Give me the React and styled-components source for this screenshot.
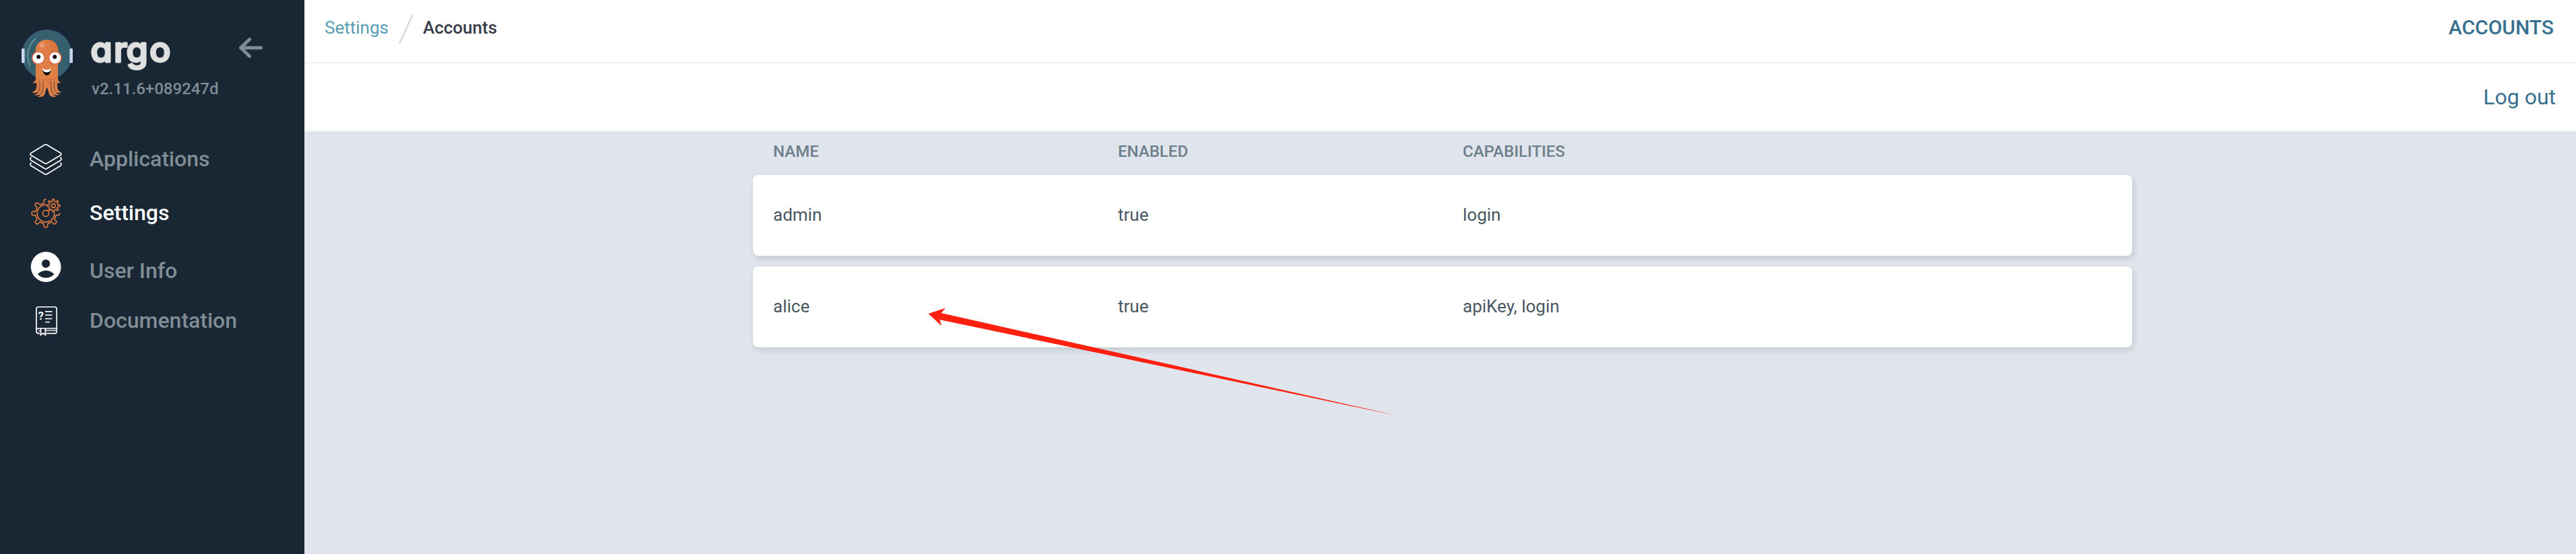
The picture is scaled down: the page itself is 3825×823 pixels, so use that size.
import React from "react";
import styled, { createGlobalStyle } from "styled-components";

const GlobalStyle = createGlobalStyle`
  *, *::before, *::after { box-sizing: border-box; }
  html, body { margin: 0; padding: 0; }
  body {
    font-family: Roboto, "Liberation Sans", sans-serif;
    background: #e0e4ec;
    overflow: hidden;
  }
`;

const Shell = styled.div`
  display: flex;
  height: 823px;
  position: relative;
`;

const Sidebar = styled.aside`
  flex: 0 0 452px;
  background: #182733;
`;

const Brand = styled.header`
  display: flex;
  align-items: flex-start;
  height: 197px;
  padding: 42px 0 0 30px;
`;

const BrandText = styled.div`
  display: flex;
  flex-direction: column;
  width: 220px;
  margin-left: 24px;
  padding-top: 12px;
`;

const Version = styled.span`
  margin-top: 2px;
  padding-left: 2px;
  font-size: 24px;
  font-weight: 500;
  line-height: 28px;
  color: #818d94;
`;

const CollapseButton = styled.button`
  display: flex;
  margin: 12px 0 0;
  padding: 0;
  border: 0;
  background: none;
`;

const Nav = styled.nav`
  display: flex;
  flex-direction: column;
`;

const NavItem = styled.a`
  display: grid;
  grid-template-columns: 48px 1fr;
  column-gap: 41px;
  align-items: center;
  height: 80px;
  padding-left: 44px;
  font-size: 32px;
  font-weight: 500;
  line-height: 36px;
  color: ${(p) => (p.$active ? "#ffffff" : "#818d94")};
`;

const NavLabel = styled.span`
  margin-top: ${(p) => p.$shift}px;
`;

const Main = styled.main`
  flex: 1;
  min-width: 0;
`;

const TopBar = styled.div`
  display: flex;
  align-items: flex-start;
  justify-content: space-between;
  height: 94px;
  padding: 21px 33px 0 30px;
  background: #fff;
  border-bottom: 2px solid #edf2f7;
`;

const Breadcrumbs = styled.div`
  display: flex;
  font-size: 26px;
  line-height: 40px;
`;

const CrumbLink = styled.a`
  color: #589db6;
`;

const Crumb = styled.span`
  font-weight: 500;
  color: #363c4a;
`;

const Slash = styled.svg`
  margin: 0 14px 0 15px;
`;

const PageTitle = styled.span`
  font-size: 30px;
  font-weight: 500;
  line-height: 40px;
  color: #396f8f;
`;

const Toolbar = styled.div`
  display: flex;
  align-items: center;
  justify-content: flex-end;
  height: 102px;
  padding-right: 30px;
  background: #fff;
  border-bottom: 2px solid #edf1f6;
`;

const LogoutLink = styled.a`
  font-size: 32px;
  line-height: 40px;
  color: #396f8f;
`;

const Table = styled.section`
  width: 2048px;
  margin: 0 0 0 666px;
`;

const TableHead = styled.div`
  display: grid;
  grid-template-columns: 1fr 1fr 2fr;
  height: 64px;
  padding-top: 14px;
  font-size: 24px;
  font-weight: 500;
  line-height: 30px;
  color: #6d7f8b;
`;

const TableRow = styled.div`
  display: grid;
  grid-template-columns: 1fr 1fr 2fr;
  align-items: center;
  height: 120px;
  margin-bottom: 16px;
  padding-bottom: 2px;
  border-radius: 8px;
  background: #fff;
  box-shadow: 2px 4px 10px rgba(20, 35, 20, 0.14);
  font-size: 26px;
  line-height: 30px;
  color: #495763;
`;

const Cell = styled.div`
  padding-left: 30px;
`;

const Pointer = styled.svg`
  position: absolute;
  left: 1370px;
  top: 450px;
  pointer-events: none;
`;

/* Smooth gear outline: four control points a tooth, joined by midpoint curves. */
function gearPath(cx, cy, tip, root, teeth, from, to) {
  const step = (Math.PI * 2) / teeth;
  const pts = [];
  const at = (r, a) => [cx + r * Math.cos(a), cy + r * Math.sin(a)];
  for (let i = from; i <= to; i += 1) {
    const a = i * step;
    if (i > from || to - from === teeth) {
      pts.push(at(root, a - step * 0.33), at(root + 0.3, a - step * 0.2), at(tip, a - step * 0.18));
    }
    pts.push(at(tip, a));
    if (i < to) {
      pts.push(at(tip, a + step * 0.18), at(root + 0.3, a + step * 0.2), at(root, a + step * 0.33));
    }
  }
  const f = (p) => p.map((n) => n.toFixed(2)).join(" ");
  let d = `M${f(pts[0])}`;
  for (let i = 1; i < pts.length - 1; i += 1) {
    const mid = [(pts[i][0] + pts[i + 1][0]) / 2, (pts[i][1] + pts[i + 1][1]) / 2];
    d += `Q${f(pts[i])} ${f(mid)}`;
  }
  return `${d}L${f(pts[pts.length - 1])}`;
}

function Mascot() {
  return (
    <svg width="80" height="104" viewBox="30 42 80 104">
      <circle cx="69.7" cy="81" r="36.4" fill="#36606e" stroke="#3b5f84" strokeWidth="1.4" />
      <rect x="32" y="72" width="4.6" height="21.5" rx="1.2" fill="#c5d6ef" />
      <rect x="103.4" y="72" width="4.6" height="21.5" rx="1.2" fill="#c5d6ef" />
      <path d="M53 57Q35 74 44.5 97.5" fill="none" stroke="#5f9297" strokeWidth="2" strokeLinecap="round" />
      <path
        d="M52.8 76C52.8 65 60 59 69.5 59S86.4 65 86.4 76L86 116C86 120 88 122 90.5 122.5C88 124 86.5 123.6 85.3 122.8C84.6 131 85 135.5 91.5 137C88.5 138.6 84 138 82 136.6C83 139 86 140.2 89 140.4C86 142 81 141.6 78.5 140C79.5 142 82 143 84.5 143.2C80 144.6 75 144 73.6 141C72 138 71.5 132 69.6 130C68 132 67.5 138 66 141C64.5 144 59 144.6 55 143.2C57.5 143 60 142 61 140C58.5 141.6 53 142 50.3 140.4C54 140.2 56.5 139 57.5 136.6C55 138 50 138.6 47 137C54 135.5 55 131 54 122.8C52.5 123.6 50 124 48 122.5C51 122 53 120 53 116Z"
        fill="#de7f48"
      />
      <path d="M71 59C81 60 86.4 66 86.4 77L86 95H73C76 82 77 68 71 59Z" fill="#dc763f" />
      <path d="M53 115.5Q69.5 122 86 115.5" fill="none" stroke="#db713d" strokeWidth="1.5" />
      <g fill="none" stroke="#6d4a3c" strokeWidth="1.1" strokeLinecap="round">
        <path d="M58.8 121Q60 130 57.5 136" />
        <path d="M64 121Q64.5 134 61 139.5" />
        <path d="M75.5 121Q75 134 78.5 139.5" />
        <path d="M80.8 121Q79.6 130 82 136" />
      </g>
      <circle cx="62.4" cy="67.3" r="3.7" fill="#e79c72" />
      <circle cx="57" cy="86" r="9.3" fill="#fff" stroke="#e0603d" strokeWidth="1.6" />
      <circle cx="81.7" cy="86" r="9.3" fill="#fff" stroke="#e0603d" strokeWidth="1.6" />
      <circle cx="57.2" cy="84.5" r="2.9" fill="#000" />
      <circle cx="81.3" cy="84.5" r="2.9" fill="#000" />
      <path d="M63 102Q69.5 109 76 102Q74.8 111.8 69.5 111.8T63 102Z" fill="#000" />
      <path d="M62.8 101.6Q69.5 106 76.2 101.6Q75.2 107.6 69.5 107.6T62.8 101.6Z" fill="#fff" />
    </svg>
  );
}

const WordmarkText = styled.text`
  font-family: Inter, "Liberation Sans", sans-serif;
  font-size: 52px;
  font-weight: 500;
  font-feature-settings: "cv11" 1, "ss03" 1;
`;

function Wordmark() {
  return (
    <svg width="140" height="62" viewBox="134 54 140 62">
      <WordmarkText
        x="134.5 169 187.5 222"
        y="92"
        fill="#dee0df"
        stroke="#dee0df"
        strokeWidth="3"
        strokeLinejoin="round"
      >
        argo
      </WordmarkText>
    </svg>
  );
}

function BackArrow() {
  return (
    <svg width="36" height="34" viewBox="355 54 36 34" fill="none" stroke="#818d94" strokeWidth="5" strokeLinecap="round" strokeLinejoin="round">
      <path d="M371.5 58.5L358.5 71L371.5 83.5M359 71H388.5" />
    </svg>
  );
}

function LayersIcon() {
  return (
    <svg width="48" height="48" viewBox="44 213 48 48" fill="none" stroke="#fff" strokeWidth="1.7" strokeLinejoin="round">
      <path d="M66.6 215Q68 214.2 69.4 215L90.2 227.6Q92 229 90.2 230.4L69.4 242.8Q68 243.6 66.6 242.8L45.8 230.4Q44 229 45.8 227.6Z" />
      <path d="M46.5 233.4Q43.8 236 45.8 238L66.6 250.6Q68 251.4 69.4 250.6L90.2 238Q92.2 236 89.5 233.4" />
      <path d="M46.5 241.4Q43.8 244 45.8 246L66.6 258.8Q68 259.6 69.4 258.8L90.2 246Q92.2 244 89.5 241.4" />
    </svg>
  );
}

function GearsIcon() {
  return (
    <svg width="48" height="48" viewBox="44 293 48 48" fill="none" stroke="#e0773c" strokeWidth="1.7" strokeLinecap="round">
      <path d={gearPath(68, 317, 20.8, 15.4, 8, 0, 6)} />
      <path d="M68 304.2A12.8 12.8 0 1 0 80.8 317" />
      <circle cx="68" cy="317" r="4.6" />
      <path d={gearPath(79.3, 305.5, 9.6, 6.6, 8, 0, 8)} />
      <circle cx="79.3" cy="305.5" r="2.9" />
    </svg>
  );
}

function UserIcon() {
  return (
    <svg width="48" height="48" viewBox="44 373 48 48">
      <circle cx="68.2" cy="396.5" r="22.4" fill="#fff" />
      <circle cx="68.1" cy="391.7" r="6.2" fill="#182733" />
      <path d="M56 407.5C59.5 403.5 64 402 68.2 402S76.900 403.5 80.4 407.500C77 411 73 412.800 68.200 412.800S59.400 411 56 407.500Z" fill="#182733" />
    </svg>
  );
}

const DocMark = styled.text`
  font-family: Roboto, sans-serif;
  font-size: 17px;
  font-weight: 700;
`;

function DocsIcon() {
  return (
    <svg width="48" height="48" viewBox="44 453 48 48" fill="none" stroke="#fff" strokeWidth="1.7">
      <path d="M59 495.300H57Q54 495.300 54 492V459Q54 456 57 456H81.500Q84.200 456 84.200 459V492.500Q84.200 495.300 81.500 495.300H68.500" />
      <path d="M54.500 490Q54.800 487.800 57.500 487.800H84" strokeWidth="1.400" />
      <path d="M57 491.500H60M68 490.800H83.500" strokeWidth="2.200" stroke="#a9b2b8" />
      <path d="M60.500 488V497.500L64 495L67.300 497.500V488" strokeWidth="1.800" />
      <path d="M67 462.800H77.500M67 468H77.500M67 473.500H77.500M67 478.500H74" />
      <DocMark x="56.5" y="475" fill="#fff" stroke="none">?</DocMark>
    </svg>
  );
}

const NAV = [
  { label: "Applications", icon: LayersIcon, shift: -3 },
  { label: "Settings", icon: GearsIcon, shift: -3, active: true },
  { label: "User Info", icon: UserIcon, shift: 9 },
  { label: "Documentation", icon: DocsIcon, shift: -3 },
];

const ACCOUNTS = [
  { name: "admin", enabled: "true", capabilities: "login" },
  { name: "alice", enabled: "true", capabilities: "apiKey, login" },
];

export default function App() {
  return (
    <Shell>
      <GlobalStyle />
      <Sidebar>
        <Brand>
          <Mascot />
          <BrandText>
            <Wordmark />
            <Version>v2.11.6+089247d</Version>
          </BrandText>
          <CollapseButton aria-label="Collapse">
            <BackArrow />
          </CollapseButton>
        </Brand>
        <Nav>
          {NAV.map(({ label, icon: Icon, shift, active }) => (
            <NavItem key={label} $active={active}>
              <Icon />
              <NavLabel $shift={shift}>{label}</NavLabel>
            </NavItem>
          ))}
        </Nav>
      </Sidebar>
      <Main>
        <TopBar>
          <Breadcrumbs>
            <CrumbLink>Settings</CrumbLink>
            <Slash width="22" height="44" viewBox="0 0 22 44">
              <path d="M1 44L21 0" stroke="#ccd6de" strokeWidth="2" />
            </Slash>
            <Crumb>Accounts</Crumb>
          </Breadcrumbs>
          <PageTitle>ACCOUNTS</PageTitle>
        </TopBar>
        <Toolbar>
          <LogoutLink>Log out</LogoutLink>
        </Toolbar>
        <Table>
          <TableHead>
            <Cell>NAME</Cell>
            <Cell>ENABLED</Cell>
            <Cell>CAPABILITIES</Cell>
          </TableHead>
          {ACCOUNTS.map((account) => (
            <TableRow key={account.name}>
              <Cell>{account.name}</Cell>
              <Cell>{account.enabled}</Cell>
              <Cell>{account.capabilities}</Cell>
            </TableRow>
          ))}
        </Table>
      </Main>
      <Pointer width="710" height="175" viewBox="1370 450 710 175">
        <path d="M1378.500 466L1404 457.500L1397.500 465L2075 617.500L1395.500 475L1398 484Z" fill="#ff200f" />
      </Pointer>
    </Shell>
  );
}
